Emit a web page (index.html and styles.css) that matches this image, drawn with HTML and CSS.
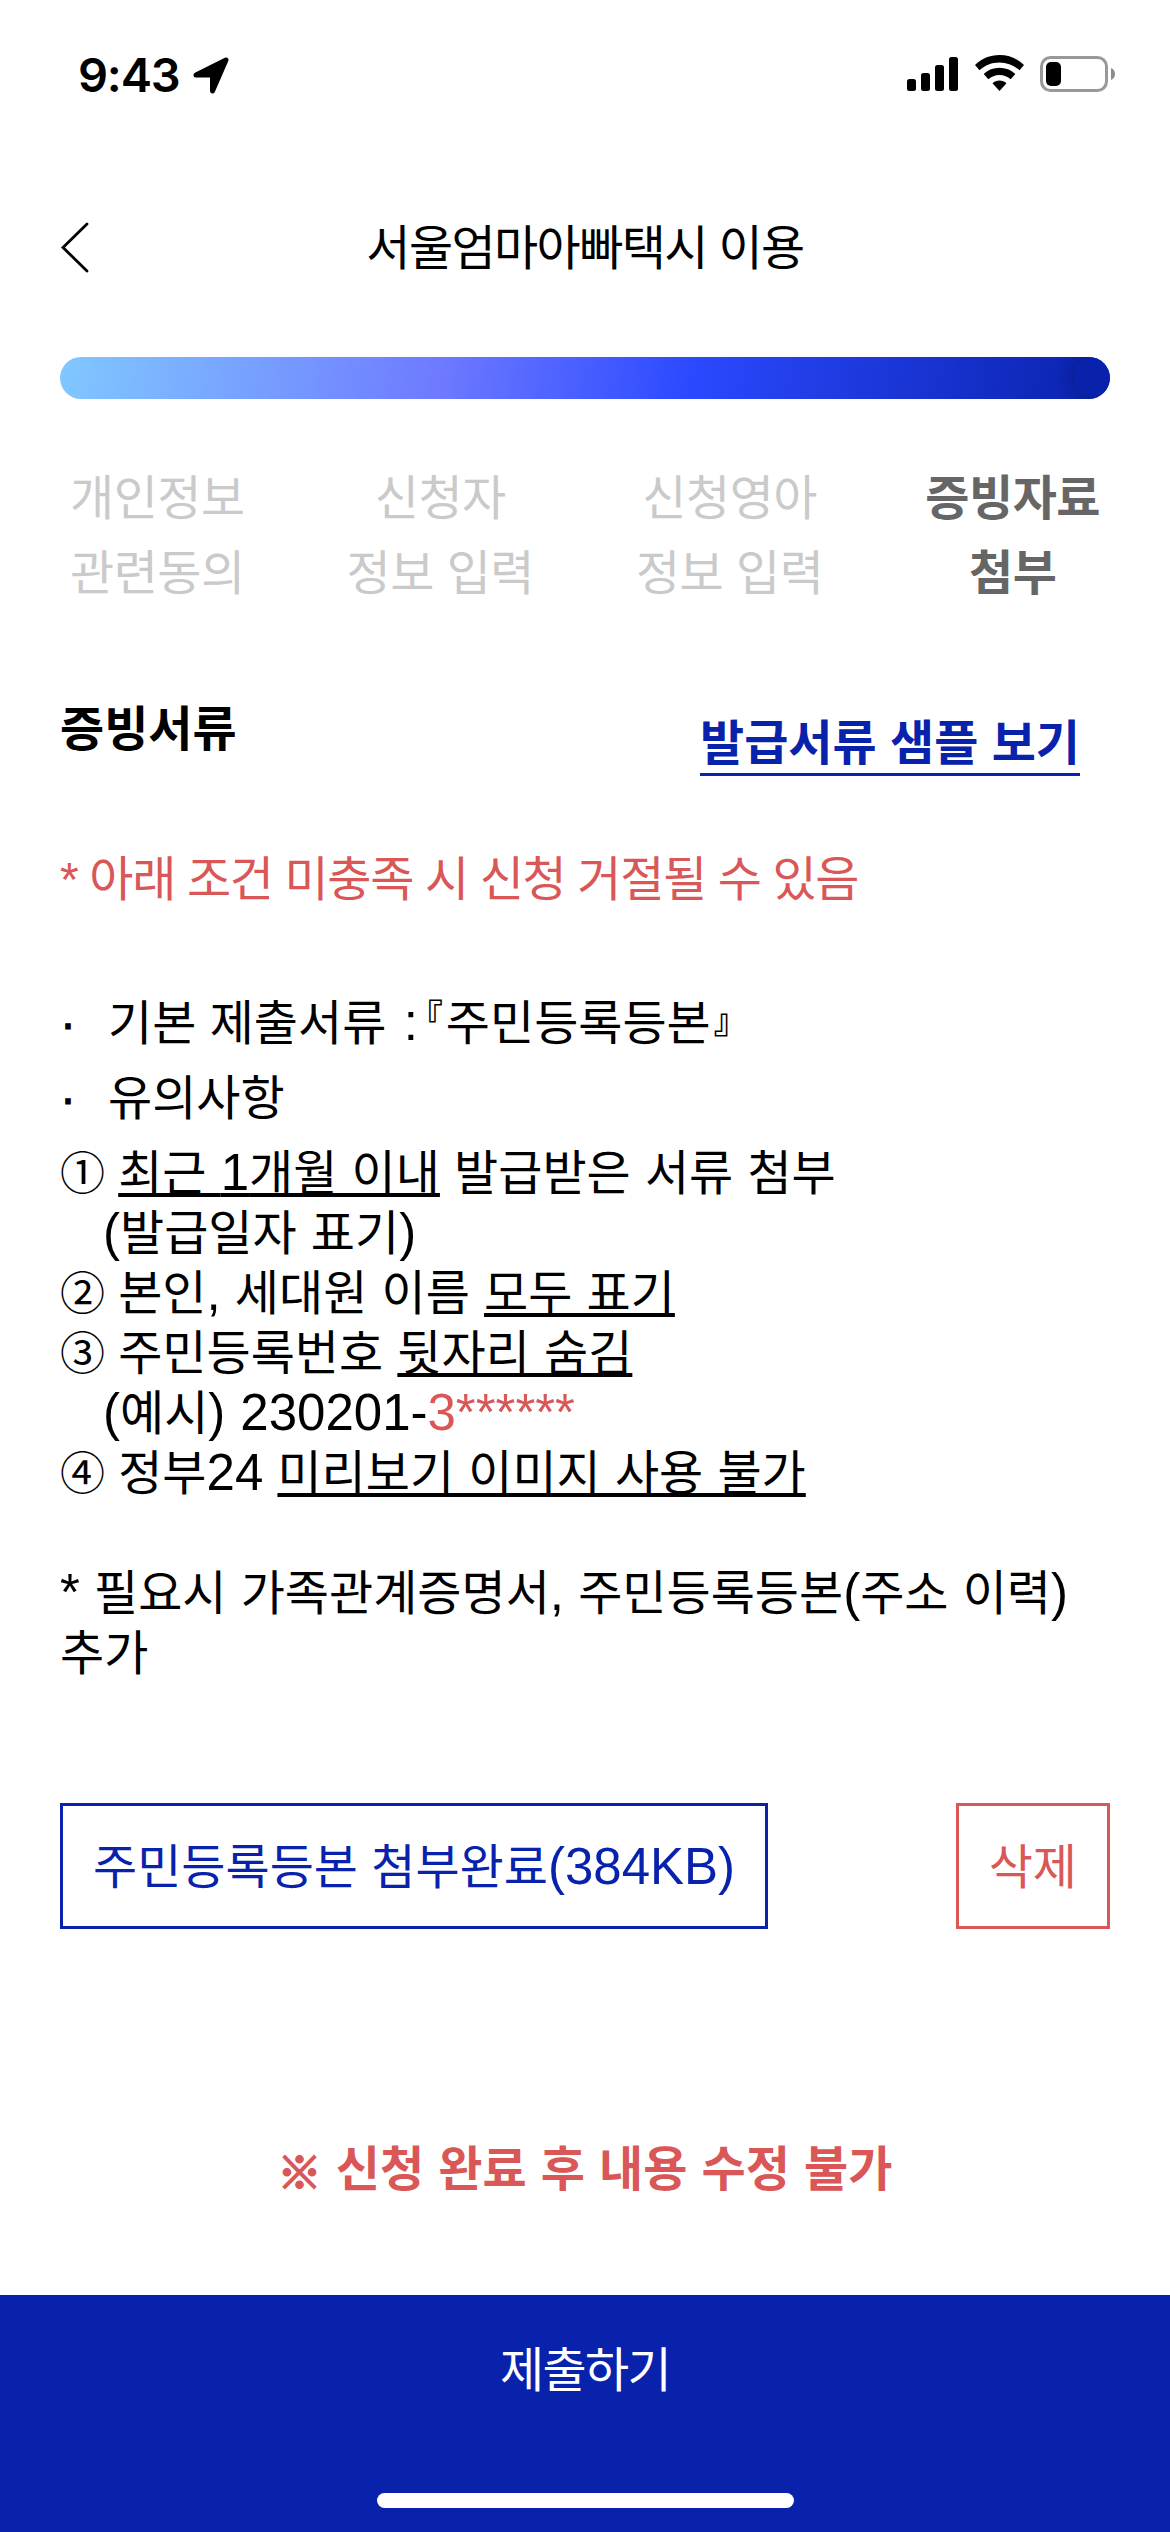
FILE: index.html
```html
<!DOCTYPE html>
<html lang="ko">
<head>
  <meta charset="UTF-8">
  <meta name="viewport" content="width=device-width, initial-scale=1.0">
  <title>서울엄마아빠택시 이용</title>
  <link rel="stylesheet" href="styles.css">
</head>
<body>
  <div class="status-bar">
    <span class="time">9:43</span>
    <svg class="location" width="36" height="37" viewBox="0 0 36 37">
      <path d="M3 18 L33 3 L19.5 34 V18 Z" stroke="#000" stroke-width="5" stroke-linejoin="round"/>
    </svg>
    <div class="status-icons">
      <svg width="51" height="34" viewBox="0 0 51 34">
        <rect x="0" y="22" width="9" height="12" rx="2.5"/>
        <rect x="14" y="16" width="9" height="18" rx="2.5"/>
        <rect x="28" y="8" width="9" height="26" rx="2.5"/>
        <rect x="42" y="0" width="9" height="34" rx="2.5"/>
      </svg>
      <svg class="wifi" width="49" height="36" viewBox="0 0 49 36">
        <path d="M24.5 0C15 0 6.500 3.600 0 10L4.500 15.200C10 10.200 17 7.500 24.500 7.500S39 10.200 44.500 15.200L49 10C42.500 3.600 34 0 24.500 0Z"/>
        <path d="M24.500 12.800C18.500 12.800 13 15 8.700 19L13.300 24.300C16.300 21.600 20.200 20 24.500 20S32.700 21.600 35.700 24.300L40.300 19C36 15 30.500 12.800 24.500 12.800Z"/>
        <path d="M24.500 25.500C21.900 25.500 19.500 26.500 17.500 28.200L24.500 36L31.500 28.200C29.500 26.500 27.100 25.500 24.500 25.500Z"/>
      </svg>
      <svg width="75" height="36" viewBox="0 0 75 36">
        <rect x="1.500" y="1.500" width="65" height="33" rx="9" fill="none" stroke="#999" stroke-width="3"/>
        <rect x="6" y="6" width="15" height="24" rx="5"/>
        <path d="M71 12C73.500 13 75 15.300 75 18S73.500 23 71 24Z" fill="#8c8c8c"/>
      </svg>
    </div>
  </div>

  <header class="header">
    <svg class="back" width="29" height="51" viewBox="0 0 29 51">
      <path d="M27 2L3 25.500L27 49" fill="none" stroke="#000" stroke-width="2.800" stroke-linecap="round"/>
    </svg>
    <h1>서울엄마아빠택시 이용</h1>
  </header>

  <main class="content">
    <div class="progress"><span class="progress-thumb"></span></div>

    <div class="steps">
      <div class="step">개인정보<br>관련동의</div>
      <div class="step">신청자<br>정보 입력</div>
      <div class="step">신청영아<br>정보 입력</div>
      <div class="step active">증빙자료<br>첨부</div>
    </div>

    <div class="section-head">
      <h2>증빙서류</h2>
      <a class="sample-link">발급서류 샘플 보기</a>
    </div>

    <p class="warning">* 아래 조건 미충족 시 신청 거절될 수 있음</p>

    <ul class="docs">
      <li>기본 제출서류 <span class="colon">:</span><span class="bracket open">『</span>주민등록등본<span class="bracket">』</span></li>
      <li>유의사항</li>
    </ul>

    <div class="notes">
      <p><span class="num">①</span> <u>최근 <span class="en">1</span>개월 이내</u> 발급받은 서류 첨부</p>
      <p class="indent"><span class="en">(</span>발급일자 표기<span class="en">)</span></p>
      <p><span class="num">②</span> 본인<span class="en">,</span> 세대원 이름 <u>모두 표기</u></p>
      <p><span class="num">③</span> 주민등록번호 <u>뒷자리 숨김</u></p>
      <p class="indent"><span class="en">(</span>예시<span class="en">) 230201-<span class="red">3******</span></span></p>
      <p><span class="num">④</span> 정부<span class="en">24</span> <u>미리보기 이미지 사용 불가</u></p>
      <p class="extra"><span class="en">*</span> 필요시 가족관계증명서<span class="en">,</span> 주민등록등본<span class="en">(</span>주소 이력<span class="en">)</span> 추가</p>
    </div>

    <div class="file-row">
      <button class="file-btn">주민등록등본 첨부완료<span class="en">(384KB)</span></button>
      <button class="file-btn delete">삭제</button>
    </div>

    <p class="final-note"><span class="mark">※</span> 신청 완료 후 내용 수정 불가</p>
  </main>

  <footer class="submit-bar">
    <span class="submit-text">제출하기</span>
    <div class="home-indicator"></div>
  </footer>
</body>
</html>
```
FILE: styles.css
```css
:root {
  --blue: #0922ac;
  --red: #d95757;
  --gray: #cacaca;
}

* {
  box-sizing: border-box;
  margin: 0;
  padding: 0;
}

body {
  width: 1170px;
  height: 2532px;
  display: flex;
  flex-direction: column;
  background: #fff;
  color: #000;
  font-family: "Liberation Sans", "Noto Sans CJK KR", sans-serif;
  font-size: 48px;
  line-height: 60px;
  word-break: keep-all;
  overflow: hidden;
}

.status-bar {
  display: flex;
  align-items: flex-start;
  height: 141px;
  padding: 55px 55px 0 78px;
}

.time {
  width: 115px;
  font-family: Inter, sans-serif;
  font-size: 47px;
  font-weight: 600;
  line-height: 39px;
  letter-spacing: -1.2px;
}

.location {
  margin-top: 2px;
}

.status-icons {
  display: flex;
  align-items: flex-start;
  margin-left: auto;
}

.status-icons svg:first-child {
  margin-top: 2px;
}

.wifi {
  margin: 0 16px 0 17px;
}

.status-icons svg:last-child {
  margin-top: 1px;
}

.header {
  display: grid;
  grid-template-columns: 60px 1fr 60px;
  align-items: center;
  height: 216px;
  padding: 0 60px;
}

.back {
  margin-bottom: 4px;
}

.header h1 {
  font-size: 48px;
  font-weight: 400;
  letter-spacing: -1.6px;
  text-align: center;
}

.content {
  flex: 1;
  padding: 0 60px;
}

.progress {
  display: flex;
  justify-content: flex-end;
  height: 42px;
  border-radius: 21px;
  background: linear-gradient(97deg, #80c8ff 0%, #6e7aff 36%, #2b49ff 60%, #0922ac 100%);
  overflow: hidden;
}

.progress-thumb {
  width: 37px;
  height: 40px;
  border-radius: 50%;
  background: var(--blue);
  box-shadow: 0 0 18px rgba(0, 0, 0, 0.3);
}

.steps {
  display: flex;
  justify-content: space-between;
  margin-top: 62px;
  padding: 0 10px;
}

.step {
  color: var(--gray);
  line-height: 75px;
  letter-spacing: -0.5px;
  text-align: center;
}

.step.active {
  color: #666;
  font-weight: 700;
}

.section-head {
  display: flex;
  justify-content: space-between;
  align-items: flex-start;
  height: 150px;
  margin-top: 89px;
  padding-right: 30px;
}

.section-head h2 {
  font-size: 48px;
  line-height: 60px;
}

.sample-link {
  margin-top: 14px;
  height: 62px;
  border-bottom: 3px solid var(--blue);
  color: var(--blue);
  font-weight: 700;
}

.warning {
  color: var(--red);
  letter-spacing: -1.35px;
}

.docs {
  margin-top: 76px;
  list-style: none;
}

.docs li {
  height: 75px;
  line-height: 75px;
}

.docs li::before {
  content: "·";
  display: inline-block;
  width: 48px;
  -webkit-text-stroke: 1px #000;
}

.colon {
  margin-left: 4px;
  font-size: 51px;
  line-height: 1;
}

.bracket {
  margin-left: 3px;
  font-size: 34px;
  font-weight: 700;
  line-height: 1;
  font-feature-settings: "halt";
  vertical-align: 7px;
}

.bracket.open {
  margin: 0 3px 0 8px;
  vertical-align: 11px;
}

.notes {
  margin-top: 8px;
  word-spacing: 0.85px;
}

/* latin letters and digits run slightly larger than hangul */
.en {
  font-size: 51px;
  line-height: 1;
}

.notes u {
  text-decoration-thickness: 4px;
  text-underline-offset: 3px;
  text-decoration-skip-ink: none;
}

.num {
  display: inline-block;
  width: 44px;
  font-size: 45px;
  line-height: 1;
}

.indent {
  padding-left: 43px;
}

.red {
  color: var(--red);
}

.extra {
  margin-top: 60px;
}

.file-row {
  display: flex;
  justify-content: space-between;
  margin-top: 119px;
}

.file-btn {
  height: 126px;
  padding: 3px 30px 0;
  border: 3px solid var(--blue);
  background: #fff;
  color: var(--blue);
  font-family: inherit;
  font-size: 48px;
  line-height: 60px;
}

.file-btn.delete {
  border-color: var(--red);
  color: var(--red);
}

.final-note {
  margin-top: 211px;
  color: var(--red);
  font-weight: 700;
  text-align: center;
  word-spacing: 0.85px;
}

.mark {
  font-size: 44px;
  line-height: 1;
  vertical-align: -3px;
  -webkit-text-stroke: 2px var(--red);
}

.submit-bar {
  display: flex;
  flex-direction: column;
  align-items: center;
  justify-content: space-between;
  height: 237px;
  padding: 46px 0 24px;
  background: var(--blue);
}

.submit-text {
  color: #fff;
  letter-spacing: -1.6px;
}

.home-indicator {
  width: 417px;
  height: 15px;
  border-radius: 8px;
  background: #fff;
}
```
